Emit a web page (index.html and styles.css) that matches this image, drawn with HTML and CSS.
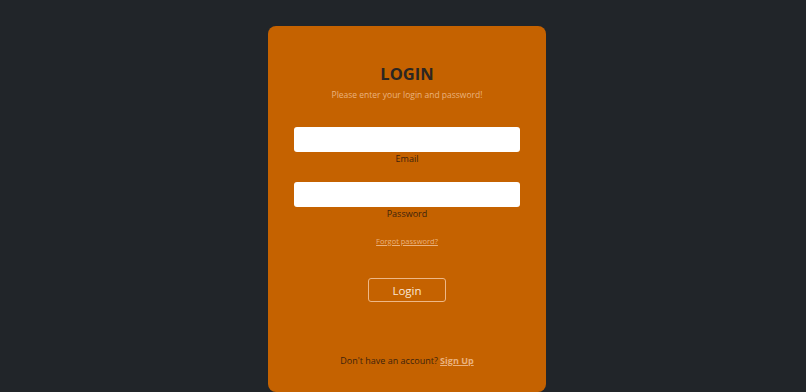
FILE: index.html
```html
<!DOCTYPE html>
<html lang="en">
<head>
  <meta charset="UTF-8">
  <meta name="viewport" content="width=device-width, initial-scale=1.0">
  <title>Login</title>
  <link rel="stylesheet" href="styles.css">
</head>
<body>
  <div class="card">
    <h2 class="title">LOGIN</h2>
    <p class="subtitle">Please enter your login and password!</p>
    <div class="field">
      <input type="email" id="email">
      <label for="email">Email</label>
    </div>
    <div class="field">
      <input type="password" id="password">
      <label for="password">Password</label>
    </div>
    <p class="forgot"><a href="#">Forgot password?</a></p>
    <button class="login-btn">Login</button>
    <p class="signup">Don't have an account? <a href="#">Sign Up</a></p>
  </div>
</body>
</html>
```

FILE: styles.css
```css
body {
  font-family: "Open Sans", sans-serif;
  margin: 0;
  padding: 0 0 0 8px;
  background-color: #212529;
  height: 392px;
  overflow: hidden;
}
.card {
  width: 278px;
  height: 366px;
  box-sizing: border-box;
  margin: 26px auto 0;
  padding: 37px 26px 0;
  background-color: #c56200;
  border-radius: 8px;
  text-align: center;
}
.title {
  font-size: 16.5px;
  line-height: 22px;
  font-weight: 700;
  color: #2b2622;
  margin: 0;
}
.subtitle {
  font-size: 8.5px;
  line-height: 12px;
  color: #eab27e;
  margin: 4px 0 0;
}
.field {
  margin-top: 26px;
}
.field + .field {
  margin-top: 17px;
}
.field input {
  display: block;
  width: 100%;
  height: 25px;
  box-sizing: border-box;
  border: none;
  border-radius: 3px;
  background-color: #fff;
  padding: 0 8px;
  outline: none;
}
.field label {
  display: block;
  padding-top: 1px;
  font-size: 9px;
  line-height: 12px;
  color: #3d230d;
}
.forgot {
  margin: 16px 0 0;
  font-size: 7.5px;
  line-height: 10px;
}
.forgot a {
  color: #eab27e;
}
.login-btn {
  display: block;
  margin: 32px auto 0;
  width: 78px;
  height: 24px;
  box-sizing: border-box;
  background: transparent;
  border: 1px solid #eeb888;
  border-radius: 3px;
  color: #fbe6d4;
  font-family: "Open Sans", sans-serif;
  font-size: 11.5px;
  font-weight: 500;
  cursor: pointer;
}
.signup {
  margin: 53px 0 0;
  font-size: 9px;
  line-height: 12px;
  color: #3d230d;
}
.signup a {
  color: #eab27e;
  font-weight: 700;
}
```
